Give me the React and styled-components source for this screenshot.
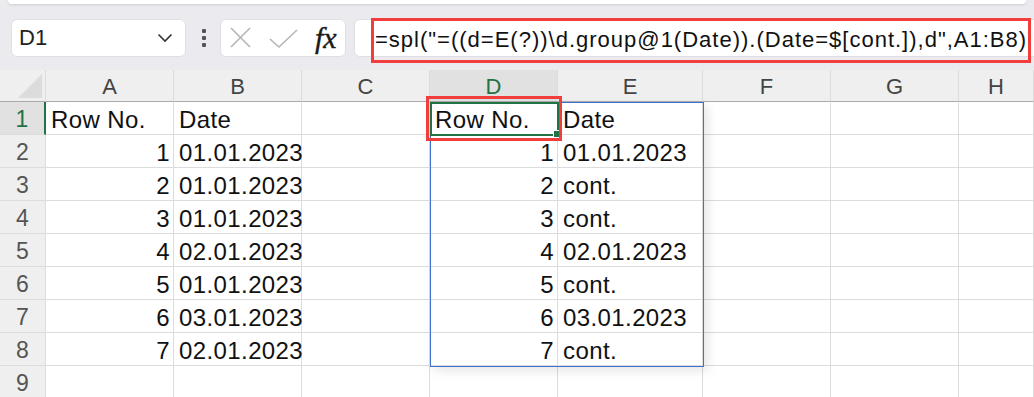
import React from 'react'
import styled, { createGlobalStyle } from 'styled-components'

const GlobalStyle = createGlobalStyle`
  body {
    margin: 0;
    background: #ebebef;
    font-family: 'Liberation Sans', Arial, sans-serif;
    overflow: hidden;
  }
`

const Page = styled.div`
  width: 1034px;
  height: 397px;
  overflow: hidden;
  background: #ebebef;
`

const TopPanel = styled.div`
  height: 4px;
  margin: 0 8px;
  background: #fff;
  border-radius: 0 0 8px 8px;
  box-shadow: 0 1px 3px rgba(0, 0, 0, 0.12);
`

const Toolbar = styled.div`
  position: relative;
  display: flex;
  align-items: center;
  gap: 8px;
  height: 38px;
  padding: 15px 0 13px 11px;
`

const Box = styled.div`
  display: flex;
  align-items: center;
  height: 38px;
  box-sizing: border-box;
  background: #fff;
  border: 1px solid #e0e0e4;
  border-radius: 6px;
`

const NameBox = styled(Box)`
  width: 175px;
  padding: 0 12px 0 7px;
  justify-content: space-between;
  font-size: 22px;
  color: #222;
`

const Dots = styled.div`
  display: flex;
  flex-direction: column;
  gap: 3px;
  margin: 0 6px 0 8px;
  span {
    width: 4px;
    height: 4px;
    background: #555;
    border-radius: 1px;
  }
`

const FxBox = styled(Box)`
  width: 126px;
  padding: 0 8px;
  gap: 17px;
`

const FxText = styled.span`
  font-family: 'Liberation Serif', 'Times New Roman', serif;
  font-style: italic;
  font-size: 30px;
  line-height: 1;
  color: #1a1a1a;
  -webkit-text-stroke: 0.4px #1a1a1a;
`

const FormulaBox = styled(Box)`
  flex: 1;
  margin-right: -10px;
  padding: 4px 0 0 20px;
  font-size: 22px;
  letter-spacing: 1px;
  color: #111;
  white-space: nowrap;
`

const RedFrame = styled.div`
  position: absolute;
  box-sizing: border-box;
  border: 3px solid #f23d3d;
  pointer-events: none;
`

const Sheet = styled.div`
  position: relative;
  display: grid;
  grid-template-columns: 46px 128px 128px 128px 128px 145px 128px 128px 75px;
  grid-template-rows: 32px repeat(9, 33px);
  background: #fff;
`

const HeadCell = styled.div`
  display: flex;
  align-items: center;
  justify-content: center;
  box-sizing: border-box;
  padding-top: 2px;
  background: ${(p) => (p.$active ? '#e1e1e1' : '#efefef')};
  color: ${(p) => (p.$active ? '#217346' : '#444')};
  font-size: 22px;
  border-right: 1px solid #dcdcdc;
  border-bottom: 1px solid #ababab;
`

const Corner = styled(HeadCell)`
  position: relative;
  &::after {
    content: '';
    position: absolute;
    right: 3px;
    bottom: 3px;
    border-style: solid;
    border-width: 0 0 24px 24px;
    border-color: transparent transparent #dcdcdc transparent;
  }
`

const RowHead = styled.div`
  display: flex;
  align-items: center;
  justify-content: center;
  box-sizing: border-box;
  padding-top: 2px;
  background: ${(p) => (p.$active ? '#e1e1e1' : '#efefef')};
  color: ${(p) => (p.$active ? '#217346' : '#555')};
  font-size: 23px;
  border-right: ${(p) => (p.$active ? '2px solid #217346' : '1px solid #dcdcdc')};
  border-bottom: 1px solid #dcdcdc;
`

const Cell = styled.div`
  display: flex;
  align-items: center;
  justify-content: ${(p) => (p.$num ? 'flex-end' : 'flex-start')};
  box-sizing: border-box;
  padding: 4px 3px 0 5px;
  font-size: 24px;
  letter-spacing: 0.4px;
  color: #111;
  white-space: nowrap;
  overflow: visible;
  border-right: 1px solid #dcdcdc;
  border-bottom: 1px solid #dcdcdc;
`

const Range = styled.div`
  position: absolute;
  left: 430px;
  top: 32px;
  width: 274px;
  height: 265px;
  box-sizing: border-box;
  border: 1px solid #3f6fcf;
  box-shadow: 4px 4px 10px rgba(0, 0, 0, 0.1);
  pointer-events: none;
`

const Selected = styled.div`
  position: absolute;
  left: 430px;
  top: 32px;
  width: 129px;
  height: 34px;
  box-sizing: border-box;
  border: 2px solid #217346;
  pointer-events: none;
  &::after {
    content: '';
    position: absolute;
    right: -4px;
    bottom: -4px;
    width: 6px;
    height: 6px;
    background: #217346;
    border: 1px solid #fff;
  }
`

const cols = ['A', 'B', 'C', 'D', 'E', 'F', 'G', 'H']

const left = [
  ['Row No.', 'Date'],
  ['1', '01.01.2023'],
  ['2', '01.01.2023'],
  ['3', '01.01.2023'],
  ['4', '02.01.2023'],
  ['5', '01.01.2023'],
  ['6', '03.01.2023'],
  ['7', '02.01.2023'],
]

const right = [
  ['Row No.', 'Date'],
  ['1', '01.01.2023'],
  ['2', 'cont.'],
  ['3', 'cont.'],
  ['4', '02.01.2023'],
  ['5', 'cont.'],
  ['6', '03.01.2023'],
  ['7', 'cont.'],
]

function rowCells(r) {
  const a = left[r] || ['', '']
  const d = right[r] || ['', '']
  const vals = [a[0], a[1], '', d[0], d[1], '', '', '']
  return vals.map((v, c) => (
    <Cell key={`c${r}-${c}`} $num={r > 0 && (c === 0 || c === 3)}>
      {v}
    </Cell>
  ))
}

export default function App() {
  return (
    <Page>
      <GlobalStyle />
      <TopPanel />
      <Toolbar>
        <NameBox>
          <span>D1</span>
          <svg width="16" height="10" viewBox="0 0 16 10">
            <path d="M1.5 1.5 L8 8 L14.5 1.5" fill="none" stroke="#333" strokeWidth="1.6" />
          </svg>
        </NameBox>
        <Dots>
          <span />
          <span />
          <span />
        </Dots>
        <FxBox>
          <svg width="23" height="22" viewBox="0 0 23 22">
            <path d="M2 1 L21 20 M21 1 L2 20" stroke="#b5b5b5" strokeWidth="1.6" />
          </svg>
          <svg width="29" height="22" viewBox="0 0 29 22">
            <path d="M1 12 L10 20 L28 3" fill="none" stroke="#b5b5b5" strokeWidth="1.6" />
          </svg>
          <FxText>fx</FxText>
        </FxBox>
        <FormulaBox>=spl("=((d=E(?))\d.group@1(Date)).(Date=$[cont.]),d",A1:B8)</FormulaBox>
        <RedFrame style={{ left: 371, top: 14, width: 660, height: 45 }} />
      </Toolbar>
      <Sheet>
        <Corner />
        {cols.map((c) => (
          <HeadCell key={c} $active={c === 'D'}>
            {c}
          </HeadCell>
        ))}
        {Array.from({ length: 9 }).map((_, r) => (
          <React.Fragment key={`r${r}`}>
            <RowHead $active={r === 0}>{r + 1}</RowHead>
            {rowCells(r)}
          </React.Fragment>
        ))}
        <Range />
        <Selected />
        <RedFrame style={{ left: 426, top: 26, width: 136, height: 45 }} />
      </Sheet>
    </Page>
  )
}
